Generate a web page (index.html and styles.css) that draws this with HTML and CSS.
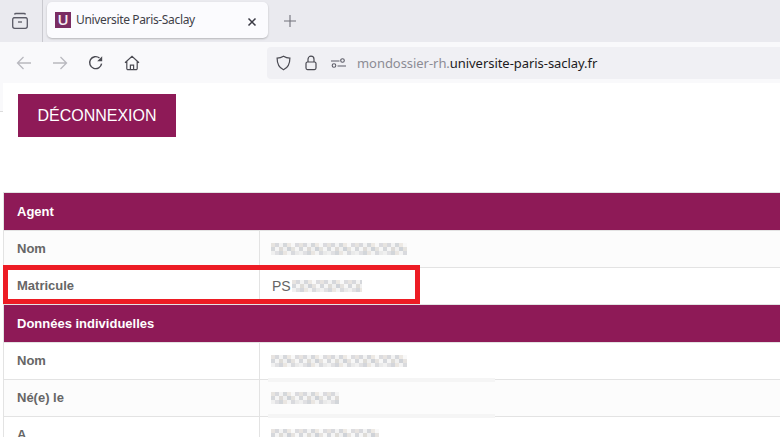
FILE: index.html
```html
<!DOCTYPE html>
<html lang="fr">
<head>
<meta charset="utf-8">
<title>Universite Paris-Saclay</title>
<link rel="stylesheet" href="styles.css">
</head>
<body>
<header class="browser">
  <div class="tabstrip">
    <div class="tabside">
      <svg class="ico" width="18" height="18" viewBox="0 0 18 18" fill="none" stroke="#5b5b66" stroke-width="1.3"><path d="M3.500 2.500a1.500 1.500 0 0 1 1.500-1h8a1.500 1.500 0 0 1 1.500 1M2.500 5.700h13"/><rect x="1.700" y="5.700" width="14.600" height="10.600" rx="2"/><path d="M7 10h4"/></svg>
    </div>
    <div class="tab">
      <span class="favicon">U</span>
      <span class="tabtitle">Universite Paris-Saclay</span>
      <svg class="tabclose" width="10" height="10" viewBox="0 0 10 10" fill="none" stroke="#3a3a44" stroke-width="1.5"><path d="M1.500 1.500l7 7M8.500 1.500l-7 7"/></svg>
    </div>
    <svg class="newtab" width="14" height="14" viewBox="0 0 14 14" fill="none" stroke="#70707a" stroke-width="1.1"><path d="M7 1v12M1 7h12"/></svg>
  </div>
  <div class="toolbar">
    <div class="nav">
      <svg width="16" height="16" viewBox="0 0 16 16" fill="none" stroke="#b9b9bf" stroke-width="1.3"><path d="M15 8H1.500M7.500 2L1.500 8l6 6"/></svg>
      <svg width="16" height="16" viewBox="0 0 16 16" fill="none" stroke="#b9b9bf" stroke-width="1.3"><path d="M1 8h13.500M8.500 2l6 6-6 6"/></svg>
      <svg width="16" height="16" viewBox="0 0 16 16" fill="none" stroke="#4a4a52" stroke-width="1.4"><path d="M13.600 8.600A6 6 0 1 1 11.500 3"/><path d="M14.200 1.200v5h-5z" fill="#4a4a52" stroke="none"/></svg>
      <svg width="16" height="16" viewBox="0 0 16 16" fill="none" stroke="#4a4a52" stroke-width="1.2"><path d="M1 7.800L8 1.400l7 6.400M2.800 6.500v7a1.200 1.200 0 0 0 1.200 1.200h8a1.200 1.200 0 0 0 1.200-1.200v-7M6.400 14.600v-4.400h3.200v4.400"/></svg>
    </div>
    <div class="urlbar">
      <svg width="15" height="16" viewBox="0 0 15 16" fill="none" stroke="#4a4a52" stroke-width="1.2"><path d="M7.500 1.200c2 1.200 4 1.800 6.400 1.900 0 5.600-1.700 9.700-6.400 11.700C2.800 12.800 1.100 8.700 1.100 3.100c2.400-.1 4.400-.7 6.400-1.900z"/></svg>
      <svg class="lock" width="12" height="16" viewBox="0 0 12 16" fill="none" stroke="#4a4a52" stroke-width="1.2"><rect x="1" y="7" width="10" height="7.600" rx="1.500"/><path d="M3 7V4.200a3 3 0 0 1 6 0V7"/></svg>
      <svg class="perm" width="15" height="10" viewBox="0 0 15 10" fill="none" stroke="#5b5b66" stroke-width="1.1"><path d="M0 3h8.500M6.500 8H15"/><circle cx="11.500" cy="2.500" r="1.800"/><circle cx="3" cy="7.500" r="1.800"/></svg>
      <span class="url"><span class="sub">mondossier-rh.</span>universite-paris-saclay.fr</span>
    </div>
  </div>
</header>
<main class="page">
  <div class="actions"><a class="logout">DÉCONNEXION</a></div>
  <section class="data">
    <div class="band">Agent</div>
    <div class="row"><div class="lab">Nom</div><div class="val"><span class="masked w-a"></span></div></div>
    <div class="row alt"><div class="lab">Matricule</div><div class="val">PS<span class="masked w-b"></span></div></div>
    <div class="band">Données individuelles</div>
    <div class="row alt"><div class="lab">Nom</div><div class="val"><span class="masked w-a"></span></div></div>
    <div class="row smeared"><div class="lab">Né(e) le</div><div class="val"><span class="masked w-c"></span></div></div>
    <div class="row alt"><div class="lab">A</div><div class="val"><span class="masked w-d"></span></div></div>
  </section>
  <div class="highlight"></div>
</main>
</body>
</html>
```
FILE: styles.css
```css
* { box-sizing: border-box; }
html, body { margin: 0; height: 437px; overflow: hidden; }
body { background: #fff; font-family: "Liberation Sans", Arial, sans-serif; }

.browser { display: flex; flex-direction: column; }
.tabstrip { height: 42px; background: #eaeaef; display: flex; align-items: flex-start; }
.tabside { width: 43px; height: 42px; border-right: 1px solid #c9c9cf; display: flex; align-items: center; justify-content: center; padding-right: 3px; }
.ico { display: block; }
.tab { width: 221px; height: 36px; margin: 2px 0 0 4px; background: #fbfbfe; border-radius: 5px; box-shadow: 0 1px 2px rgba(0,0,0,.22); display: flex; align-items: center; padding-left: 8px; position: relative; }
.favicon { width: 16px; height: 16px; background: #7a2c63; color: #f6eef3; font: 600 15px/14px "Open Sans", sans-serif; text-align: center; }
.tabtitle { margin-left: 5px; font: 12px/16px "Noto Sans", sans-serif; letter-spacing: -.35px; color: #3f3f48; white-space: nowrap; }
.tabclose { position: absolute; right: 11px; top: 15px; }
.newtab { margin: 14px 0 0 15px; }

.toolbar { height: 41px; background: #f9f9fb; display: flex; align-items: center; }
.nav { width: 267px; display: flex; align-items: center; gap: 20px; padding-left: 16px; }
.urlbar { flex: 1; height: 32px; background: #f0f0f4; border-radius: 4px 0 0 4px; display: flex; align-items: center; padding-left: 9px; gap: 13px; }
.lock { margin-left: 1px; }
.perm { margin-left: 1px; }
.url { margin-left: -2px; font: 13px/16px "Noto Sans", sans-serif; letter-spacing: -.05px; color: #1c1b22; white-space: nowrap; }
.sub { color: #8c8c94; }

.page { position: relative; height: 354px; padding-left: 3px; overflow: hidden; }
.page::before { content: ""; position: absolute; left: 0; top: 0; width: 3px; height: 28px; background: #f9f9fb; border-bottom: 1px solid #dcdcdc; }
.actions { height: 109px; padding: 11px 0 0 15px; }
.logout { display: inline-block; width: 158px; height: 43px; background: #8e1a57; color: #fff; font-size: 16px; line-height: 43px; text-align: center; }
.data { border-left: 1px solid #e3e3e3; }
.band { height: 38px; background: #8e1a57; color: #fff; font-size: 13px; font-weight: 700; line-height: 37px; padding-left: 13px; border-top: 1px solid #e3e3e3; }
.row { display: flex; height: 37px; border-top: 1px solid #e3e3e3; background: #fcfcfc; color: #666; font-size: 13px; line-height: 36px; }
.row.alt { background: #fff; }
.lab { width: 256px; padding-left: 13px; font-weight: 700; border-right: 1px solid #e3e3e3; }
.val { padding-left: 12px; display: flex; align-items: center; font-size: 14px; position: relative; flex: 1; }
.smeared .val::before, .smeared .val::after { content: ""; position: absolute; left: 8px; width: 227px; height: 4px; background: #f5f5f5; }
.smeared .val::before { top: -2px; }
.smeared .val::after { bottom: -2px; }
.masked { display: block; height: 12px; opacity: .85; filter: blur(.5px);
  background-image:
    linear-gradient(90deg, #e4e0dc 0 4px, #d2d3d8 4px 8px, #f2f2f2 8px 12px, #cfd2d6 12px 16px, #ebe6e0 16px 20px, #f8f8f8 20px 24px, #d6d6da 24px 28px),
    linear-gradient(90deg, #d0d2d6 0 4px, #f4f4f4 4px 8px, #d9d6d2 8px 12px, #eeeeee 12px 16px, #c8ccd2 16px 20px, #e2dfdb 20px 24px, #f6f6f6 24px 28px),
    linear-gradient(90deg, #efefef 0 4px, #dcdcdf 4px 8px, #cdd0d5 8px 12px, #e8e3de 12px 16px, #f3f3f3 16px 20px, #d4d5d9 20px 24px, #e7e7e7 24px 28px);
  background-size: 28px 4px;
  background-position: 0 0, 0 4px, 0 8px;
  background-repeat: repeat-x;
}
.w-a { width: 136px; margin-left: -1px; }
.w-b { width: 70px; margin-left: 1px; }
.w-c { width: 68px; margin-left: -1px; }
.w-d { width: 108px; margin-left: -1px; }

.highlight { position: absolute; left: 3px; top: 182px; width: 417px; height: 39px; border: 5px solid #ed1c24; pointer-events: none; }
```
